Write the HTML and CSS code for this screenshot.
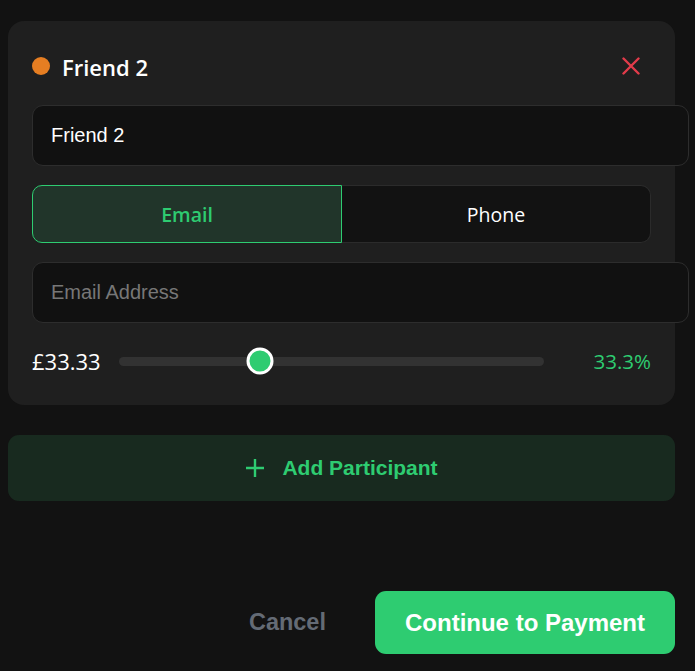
FILE: index.html
```html
<!DOCTYPE html>
<html lang="en">
<head>
<meta charset="utf-8">
<title>Split participants</title>
<link rel="stylesheet" href="styles.css">
</head>
<body>
<div class="page">
  <div class="card">
    <div class="card-head">
      <span class="dot"></span>
      <span class="name">Friend 2</span>
      <button class="remove" aria-label="Remove">
        <svg width="18" height="18" viewBox="0 0 18 18"><path d="M1.5 1.5L16.5 16.5M16.5 1.5L1.5 16.5" stroke="#e23b4a" stroke-width="2.4" stroke-linecap="round" fill="none"/></svg>
      </button>
    </div>
    <input class="field" type="text" value="Friend 2">
    <div class="tabs">
      <button class="tab active">Email</button>
      <button class="tab">Phone</button>
    </div>
    <input class="field" type="email" placeholder="Email Address">
    <div class="share">
      <span class="amount">£33.33</span>
      <div class="track"><span class="thumb" style="left:33.3%"></span></div>
      <span class="pct">33.3%</span>
    </div>
  </div>
  <button class="add">
    <svg width="20" height="20" viewBox="0 0 20 20"><path d="M10 1V19M1 10H19" stroke="#2ecc71" stroke-width="2.4" fill="none"/></svg>
    <span>Add Participant</span>
  </button>
  <div class="actions">
    <button class="cancel">Cancel</button>
    <button class="continue">Continue to Payment</button>
  </div>
</div>
</body>
</html>
```
FILE: styles.css
```css
html, body {
  margin: 0;
  padding: 0;
  background: #121212;
}
body {
  font-family: "Open Sans", "Noto Sans", sans-serif;
  color: #ffffff;
}
.page {
  width: 667px;
  padding: 21px 0 0 8px;
}
.card {
  background: #1f1f1f;
  border-radius: 16px;
  padding: 24px;
}
.card-head {
  display: flex;
  align-items: center;
  height: 42px;
  margin-bottom: 18px;
}
.dot {
  width: 18px;
  height: 18px;
  border-radius: 50%;
  background: #e67e22;
  margin-right: 12px;
}
.name {
  font-size: 22px;
  font-weight: 600;
  flex: 1;
  padding-top: 2px;
}
.remove {
  background: none;
  border: none;
  padding: 0;
  margin-right: 11px;
  width: 18px;
  height: 18px;
  display: flex;
}
.field {
  display: block;
  box-sizing: content-box;
  width: 100%;
  height: 23px;
  padding: 18px;
  margin: 0;
  border: 1px solid #2d2d2d;
  border-radius: 11px;
  background: #111111;
  color: #ffffff;
  font-family: "Liberation Sans", Arial, sans-serif;
  font-size: 20px;
  outline: none;
}
.field::placeholder {
  color: #777777;
}
.tabs {
  display: flex;
  margin: 19px 0;
  height: 58px;
}
.tab {
  flex: 1;
  margin: 0;
  background: #121212;
  border: 1px solid #2b2b2b;
  border-left: none;
  border-radius: 0 10px 10px 0;
  color: #ffffff;
  font-family: "Open Sans", "Noto Sans", sans-serif;
  font-size: 19.5px;
}
.tab.active {
  background: #21352a;
  border: 1px solid #2ecc71;
  border-radius: 10px 0 0 10px;
  color: #2ecc71;
  font-weight: 600;
}
.share {
  display: flex;
  align-items: center;
  height: 40px;
  margin-top: 18px;
  gap: 18px;
}
.amount {
  font-size: 22px;
}
.track {
  position: relative;
  flex: 1;
  height: 9px;
  border-radius: 5px;
  background: #323232;
}
.thumb {
  position: absolute;
  top: 50%;
  width: 21px;
  height: 21px;
  border: 3px solid #ffffff;
  border-radius: 50%;
  background: #2ecc71;
  transform: translate(-50%, -50%);
}
.pct {
  width: 89px;
  text-align: right;
  color: #2ecc71;
  font-size: 20.5px;
}
.add {
  display: flex;
  align-items: center;
  justify-content: center;
  gap: 17px;
  width: 100%;
  height: 66px;
  margin-top: 30px;
  border: none;
  border-radius: 11px;
  background: #182a1f;
  color: #2ecc71;
  font-family: "Liberation Sans", Arial, sans-serif;
  font-size: 21px;
  font-weight: 700;
}
.actions {
  display: flex;
  justify-content: flex-end;
  align-items: center;
  gap: 25px;
  margin-top: 90px;
}
.cancel {
  background: none;
  border: none;
  padding: 0 24px;
  height: 63px;
  color: #646b75;
  font-family: "Liberation Sans", Arial, sans-serif;
  font-size: 23.5px;
  font-weight: 700;
}
.continue {
  height: 63px;
  padding: 0 30px;
  border: none;
  border-radius: 11px;
  background: #2ecc71;
  color: #ffffff;
  font-family: "Liberation Sans", Arial, sans-serif;
  font-size: 24px;
  font-weight: 700;
}
```
